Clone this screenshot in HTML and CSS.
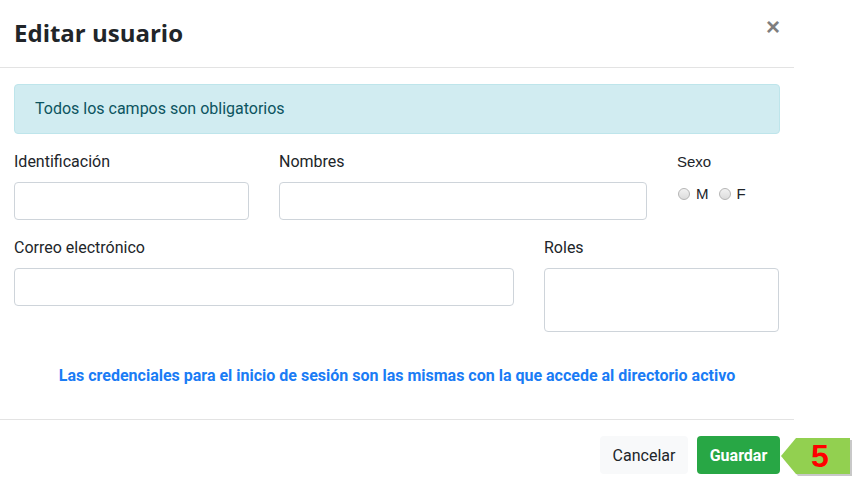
FILE: index.html
```html
<!DOCTYPE html>
<html lang="es">
<head>
<meta charset="utf-8">
<title>Editar usuario</title>
<link rel="stylesheet" href="styles.css">
</head>
<body>
<div class="modal">
  <div class="modal-header">
    <h1 class="modal-title">Editar usuario</h1>
    <span class="close">&times;</span>
  </div>
  <div class="modal-body">
    <div class="alert">Todos los campos son obligatorios</div>
    <div class="row row-1">
      <div class="field">
        <label class="label">Identificación</label>
        <input class="input" type="text">
      </div>
      <div class="field">
        <label class="label">Nombres</label>
        <input class="input" type="text">
      </div>
      <div class="field">
        <label class="label label-arial">Sexo</label>
        <div class="radios">
          <span class="radio"><span class="dot"></span>M</span>
          <span class="radio"><span class="dot"></span>F</span>
        </div>
      </div>
    </div>
    <div class="row row-2">
      <div class="field">
        <label class="label">Correo electrónico</label>
        <input class="input" type="text">
      </div>
      <div class="field">
        <label class="label">Roles</label>
        <div class="select"></div>
      </div>
    </div>
    <p class="note">Las credenciales para el inicio de sesión son las mismas con la que accede al directorio activo</p>
  </div>
  <div class="modal-footer">
    <button class="btn btn-light">Cancelar</button>
    <button class="btn btn-success">Guardar</button>
    <div class="badge">
      <svg class="badge-arrow" width="72" height="40" viewBox="0 0 72 40">
        <polygon points="17,3 71,3 71,39 17,39 2,21" fill="#9a9a9a" opacity="0.55"/>
        <polygon points="15,1 69,1 69,37 15,37 0,19" fill="#92d050"/>
      </svg>
      <span class="badge-num">5</span>
    </div>
  </div>
</div>
</body>
</html>
```

FILE: styles.css
```css
* { box-sizing: border-box; }
html, body { margin: 0; padding: 0; background: #fff; }
body { font-family: Roboto, "Liberation Sans", sans-serif; color: #212529; width: 862px; height: 502px; overflow: hidden; }

.modal { width: 794px; }

.modal-header {
  height: 68px;
  border-bottom: 1px solid #e3e3e3;
  display: flex;
  align-items: flex-start;
  justify-content: space-between;
  padding: 0 14px;
}
.modal-title {
  margin: 0;
  padding-top: 17px;
  font-family: "Open Sans", sans-serif;
  font-weight: 700;
  font-size: 24px;
  line-height: 32px;
  color: #212529;
}
.close {
  margin-top: 12px;
  font-family: "Liberation Sans", Arial, sans-serif;
  font-weight: 700;
  font-size: 24px;
  line-height: 30px;
  color: #7f7f7f;
}

.modal-body { padding: 16px 14px 0 14px; }

.alert {
  height: 50px;
  width: 766px;
  background: #d1ecf1;
  border: 1px solid #bee5eb;
  border-radius: 4px;
  color: #0c5460;
  font-size: 16px;
  line-height: 48px;
  padding: 0 20px;
}

.row { display: grid; column-gap: 30px; }
.row-1 { grid-template-columns: 235px 368px 1fr; margin-top: 16px; }
.row-2 { grid-template-columns: 500px 235px; margin-top: 16px; }

.field { display: flex; flex-direction: column; }
.label {
  font-size: 16px;
  line-height: 22px;
  height: 23px;
  padding-top: 1px;
  margin-bottom: 9px;
  color: #212529;
}
.label-arial { font-family: "Liberation Sans", Arial, sans-serif; font-size: 15px; }

.input {
  height: 38px;
  border: 1px solid #ced4da;
  border-radius: 4px;
  background: #fff;
  margin: 0;
  padding: 6px 12px;
  font: inherit;
}
.select {
  height: 64px;
  border: 1px solid #ced4da;
  border-radius: 4px;
}

.radios {
  display: flex;
  gap: 9px;
  font-family: "Liberation Sans", Arial, sans-serif;
  font-size: 15px;
  line-height: 22px;
  margin-top: 1px;
  color: #212529;
}
.radio { display: flex; align-items: center; }
.dot {
  width: 12px;
  height: 12px;
  border-radius: 50%;
  border: 1px solid #b5b5b5;
  background: linear-gradient(#f2f2f2, #dcdcdc);
  margin-right: 6px;
  margin-left: 1px;
}

.note {
  margin: 34px 0 0 0;
  text-align: center;
  font-weight: 700;
  font-size: 16px;
  line-height: 20px;
  color: #1a7cf5;
  height: 20px;
}

.modal-footer {
  margin-top: 33px;
  border-top: 1px solid #e3e3e3;
  display: flex;
  justify-content: flex-end;
  gap: 9px;
  padding: 16px 14px 16px 14px;
  position: relative;
}
.btn {
  height: 38px;
  border: 0;
  border-radius: 4px;
  font-family: Roboto, sans-serif;
  font-size: 16px;
  padding: 0;
  margin: 0;
}
.btn-light { background: #f8f9fa; color: #212529; width: 88px; }
.btn-success { background: #28a745; color: #fff; font-weight: 700; width: 83px; }

.badge {
  position: absolute;
  left: 781px;
  top: 17px;
  width: 72px;
  height: 40px;
}
.badge-arrow { position: absolute; left: 0; top: 0; }
.badge-num {
  position: absolute;
  left: 30px;
  top: 0;
  font-family: "Liberation Sans", Arial, sans-serif;
  font-weight: 700;
  font-size: 32px;
  line-height: 38px;
  color: #ff0000;
}
```
